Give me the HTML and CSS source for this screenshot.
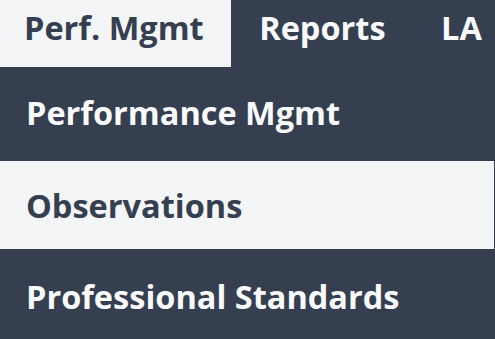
FILE: index.html
```html
<!DOCTYPE html>
<html lang="en">
<head>
<meta charset="utf-8">
<title>Menu</title>
<link rel="stylesheet" href="styles.css">
</head>
<body>
<nav class="topbar">
  <a class="tab tab-active" href="#">Perf. Mgmt</a>
  <a class="tab" href="#">Reports</a>
  <a class="tab" href="#">LA</a>
</nav>
<ul class="dropdown">
  <li class="item item-first"><a href="#">Performance Mgmt</a></li>
  <li class="item item-active"><a href="#">Observations</a></li>
  <li class="item item-last"><a href="#">Professional Standards</a></li>
</ul>
</body>
</html>
```
FILE: styles.css
```css
html, body {
  margin: 0;
  padding: 0;
}
body {
  background: #353f50;
  font-family: "Open Sans", "Noto Sans", sans-serif;
  font-weight: 700;
  font-size: 32.5px;
  color: #f9fafb;
  overflow: hidden;
}
a {
  color: inherit;
  text-decoration: none;
}
.topbar {
  display: flex;
  height: 67px;
  white-space: nowrap;
}
.tab {
  display: block;
  box-sizing: border-box;
  height: 67px;
  padding: 5px 27.5px 0 24px;
  line-height: 45px;
}
.tab + .tab {
  padding-left: 28px;
}
.tab-active {
  background: #f4f5f7;
  color: #353f50;
}
.dropdown {
  list-style: none;
  margin: 0;
  padding: 0;
}
.item {
  display: flex;
  align-items: center;
  box-sizing: border-box;
  height: 88px;
  padding-left: 26px;
  line-height: 45px;
  white-space: nowrap;
}
.item-first {
  height: 94px;
  padding-bottom: 4px;
}
.item-active {
  background: #f4f5f7;
  color: #353f50;
  margin-right: 1px;
}
.item-last {
  height: 91px;
  padding-top: 3px;
}
```
